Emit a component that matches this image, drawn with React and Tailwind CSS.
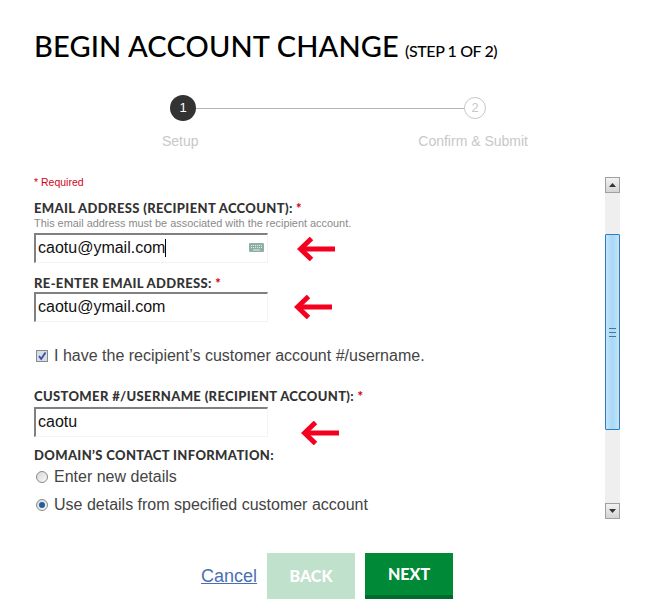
import React from 'react';

const labelFont = "font-['Lato','Liberation_Sans',sans-serif] font-black";

const RedArrow = ({ className }) => (
  <svg className={`absolute ${className}`} width="39" height="24" viewBox="0 0 39 24" fill="none">
    <path d="M38 12H5" stroke="#f5001e" strokeWidth="5" />
    <path d="M14.5 1.5L3.5 12L14.5 22.5" stroke="#f5001e" strokeWidth="5" />
  </svg>
);

const FieldLabel = ({ children, required, className = '' }) => (
  <div className={`${labelFont} text-[13px] leading-[16px] tracking-[0.36px] text-[#333] ${className}`}>
    {children}
    {required && <span className="text-[#d0021b]"> *</span>}
  </div>
);

const TextBox = ({ value, caret, keyboard, arrow }) => (
  <div className="relative w-[234px] h-[30px]">
    <div className="w-full h-full flex items-center pb-[2px] pl-[2px] border-t-2 border-l-2 border-[#808080] border-r border-b border-r-[#f4f4f4] border-b-[#f4f4f4] text-[16px] text-[#111]">
      <span>{value}</span>
      {caret && <span className="w-px h-[18px] bg-black" />}
      {keyboard && (
        <svg className="absolute right-[4px] top-[10px]" width="15" height="9" viewBox="0 0 15 9">
          <rect width="15" height="9" rx="1" fill="#8fb0a6" />
          <path d="M2 2.5h11M2 4.5h11" stroke="#dfeae6" strokeWidth="1" strokeDasharray="1 1" />
          <path d="M4 7h7" stroke="#dfeae6" strokeWidth="1" />
        </svg>
      )}
    </div>
    {arrow}
  </div>
);

const Radio = ({ checked, label, className = '' }) => (
  <div className={`flex items-center h-[20px] ${className}`}>
    <span className="w-[12px] h-[12px] ml-[2px] rounded-full border border-[#8a8a8a] bg-gradient-to-br from-[#d8d8d8] to-[#f8f8f8] flex items-center justify-center">
      {checked && <span className="w-[6px] h-[6px] rounded-full bg-[#1f5f9e]" />}
    </span>
    <span className="ml-[6px] text-[16px] text-[#444]">{label}</span>
  </div>
);

const ScrollButton = ({ up }) => (
  <div className="w-[15px] h-[16px] bg-gradient-to-b from-[#f2f2f2] to-[#d4d4d4] border border-[#a0a0a0] flex items-center justify-center">
    <svg width="7" height="4" viewBox="0 0 7 4">
      <path d={up ? 'M3.5 0L7 4H0Z' : 'M0 0H7L3.5 4Z'} fill="#333" />
    </svg>
  </div>
);

export default function App() {
  return (
    <div className="w-[648px] h-[612px] bg-white overflow-hidden font-['Liberation_Sans',sans-serif]">
      <div className="pl-[34px] pt-[29px] flex items-baseline font-['Lato','Liberation_Sans',sans-serif] text-black">
        <h1 className="text-[29px] leading-[34px] font-medium tracking-[0.15px]">BEGIN ACCOUNT CHANGE</h1>
        <span className="ml-[6px] text-[16px] font-medium tracking-[-0.4px]">(STEP 1 OF 2)</span>
      </div>

      <div className="mt-[32px] ml-[162px] w-[366px] relative">
        <div className="flex items-center ml-[8px] w-[316px]">
          <div className="w-[26px] h-[26px] rounded-full bg-[#333] text-white text-[13px] flex items-center justify-center">1</div>
          <div className="flex-1 h-px bg-[#b5b5b5]" />
          <div className="w-[22px] h-[22px] rounded-full border border-[#c8c8c8] text-[#c8c8c8] text-[13px] flex items-center justify-center">2</div>
        </div>
        <div className="flex justify-between mt-[12px] text-[14px] leading-[16px] text-[#c8c8c8]">
          <span>Setup</span>
          <span>Confirm &amp; Submit</span>
        </div>
      </div>

      <div className="mt-[28px] ml-[34px] w-[586px] h-[342px] flex justify-between">
        <div>
          <div className="text-[10.5px] leading-[12px] text-[#d0021b] mt-[-1px]">* Required</div>
          <FieldLabel required className="mt-[12px]">EMAIL ADDRESS (RECIPIENT ACCOUNT):</FieldLabel>
          <div className="text-[10.9px] leading-[13px] text-[#8a8a8a] mt-[1px] mb-[3px]">This email address must be associated with the recipient account.</div>
          <TextBox value="caotu@ymail.com" caret keyboard arrow={<RedArrow className="left-[263px] top-[4px]" />} />
          <FieldLabel required className="mt-[12px] mb-[1px]">RE-ENTER EMAIL ADDRESS:</FieldLabel>
          <TextBox value="caotu@ymail.com" arrow={<RedArrow className="left-[260px] top-[3px]" />} />
          <div className="flex items-center mt-[24px] h-[20px]">
            <span className="w-[12px] h-[12px] ml-[2px] border border-[#8a8a8a] bg-[#d5dcea] flex items-center justify-center">
              <svg width="10" height="10" viewBox="0 0 10 10">
                <path d="M2 5l2.2 3L8.5 1.5" stroke="#3b4f9c" strokeWidth="1.8" fill="none" />
              </svg>
            </span>
            <span className="ml-[6px] text-[16px] text-[#444]">I have the recipient’s customer account #/username.</span>
          </div>
          <FieldLabel required className="mt-[22px] mb-[3px]">CUSTOMER #/USERNAME (RECIPIENT ACCOUNT):</FieldLabel>
          <TextBox value="caotu" arrow={<RedArrow className="left-[267px] top-[14px]" />} />
          <FieldLabel className="mt-[10px] mb-[4px]">DOMAIN’S CONTACT INFORMATION:</FieldLabel>
          <Radio label="Enter new details" />
          <Radio checked label="Use details from specified customer account" className="mt-[8px]" />
        </div>

        <div className="w-[15px] h-full bg-[#efefef] flex flex-col">
          <ScrollButton up />
          <div className="flex-1 pt-[41px] pb-[73px]">
            <div className="h-full rounded-[1px] border border-[#2f7fc0] bg-gradient-to-r from-[#c4e4f8] via-[#a8d8f6] to-[#c4e4f8] flex items-center justify-center">
              <div className="w-[7px] h-[9px] flex flex-col justify-between">
                <span className="h-px bg-[#3d7a9e]" />
                <span className="h-px bg-[#3d7a9e]" />
                <span className="h-px bg-[#3d7a9e]" />
              </div>
            </div>
          </div>
          <ScrollButton />
        </div>
      </div>

      <div className="mt-[34px] ml-[201px] flex items-center">
        <a href="#" className="text-[18px] text-[#4a6fb5] underline mr-[10px]">Cancel</a>
        <button className="w-[88px] h-[46px] bg-[#c0e2cd] text-white text-[16px] font-['Lato','Liberation_Sans',sans-serif] font-black">BACK</button>
        <button className="ml-[10px] w-[88px] h-[46px] bg-[#008a38] border-b-4 border-[#006b2c] text-white text-[16px] font-['Lato','Liberation_Sans',sans-serif] font-black">NEXT</button>
      </div>
    </div>
  );
}
